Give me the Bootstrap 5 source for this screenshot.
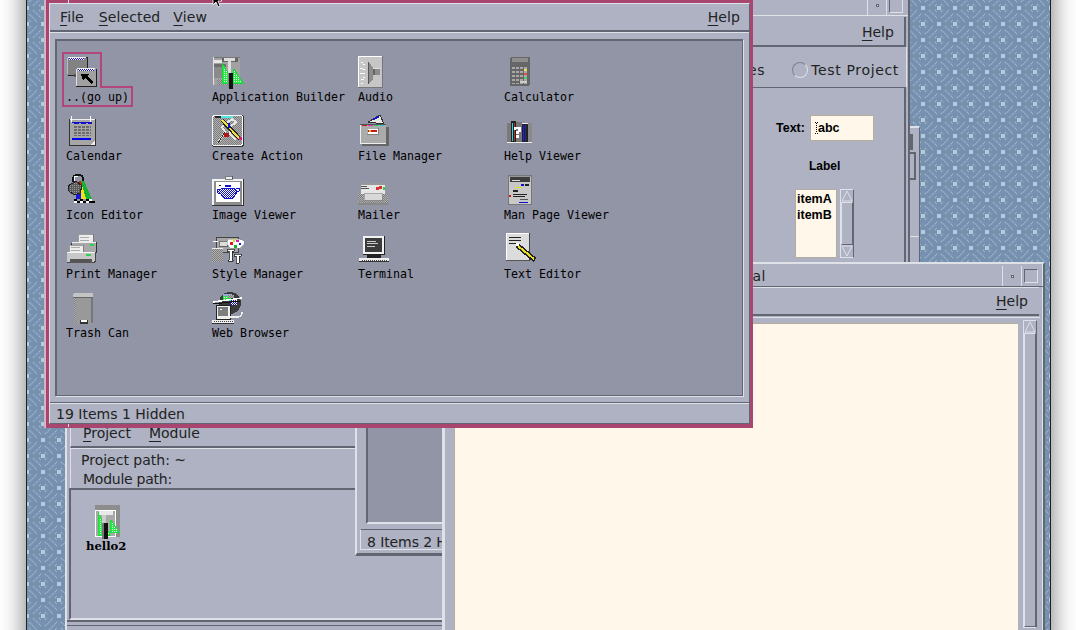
<!DOCTYPE html>
<html lang="en">
<head>
<meta charset="utf-8">
<title>CDE Desktop</title>
<link rel="stylesheet" href="https://cdn.jsdelivr.net/npm/bootstrap@5.3.0/dist/css/bootstrap.min.css">
<style>
html,body{margin:0;height:630px;overflow:hidden;background:#fff;}
:root{--g:#aeb2c3;--p:#9295a6;--lt:#dfe1e8;--dk:#626572;--pk:#a94670;--cr:#fff7e9;}
.dt-root{position:relative;width:1076px;height:630px;overflow:hidden;background:#fff;font-family:"DejaVu Sans",sans-serif;font-size:14px;color:#222;line-height:1;}
.dt-screen{position:absolute;left:26px;top:-40px;width:1025px;height:720px;background:#7f9ab6;border:solid #222;border-width:0 1px;box-shadow:0 0 24px rgba(0,0,0,.55);}
.dt-wall{display:block;width:100%;height:100%;}
.cde-win{position:absolute;background:var(--g);overflow:hidden;}
.mnemo u{text-decoration-thickness:1px;text-underline-offset:3px;}
.sliver{left:908px;top:126px;width:12px;height:140px;border-top:2px solid var(--lt);border-left:2px solid var(--dk);border-right:1px solid var(--dk);}
.sliver-a{height:16px;width:3px;background:var(--dk);margin-top:6px;}
.sliver-b{height:28px;width:6px;border:solid var(--dk);border-width:2px 2px 2px 0;margin-top:2px;}
.sliver-c{height:1px;background:var(--lt);margin-top:56px;}
.winab{left:738px;top:-4px;width:172px;height:270px;border-right:2px solid var(--dk);}
.ab-title{height:20px;border-bottom:1px solid var(--lt);padding-right:3px;}
.tb-btn{width:19px;border-left:1px solid var(--lt);}
.tb-min{width:3px;height:3px;border:1px solid var(--dk);background:var(--lt);}
.tb-max{width:14px;height:14px;border:1px solid var(--dk);border-right-color:var(--lt);border-bottom-color:var(--lt);}
.ab-menu{height:30px;border-bottom:2px solid var(--dk);border-right:2px solid var(--dk);margin:1px 2px 0 0;padding:2px 10px 0 0;letter-spacing:.05px;}
.ab-tabs{height:40px;border-right:1px solid var(--lt);margin-right:1px;padding:6px 0 0 10px;letter-spacing:.65px;}
.ab-radio{width:16px;height:16px;border-radius:50%;border:1.5px solid;border-color:#7f8291 var(--lt) var(--lt) #7f8291;margin-left:27px;margin-right:3px;}
.ab-body{border-top:1px solid var(--dk);border-right:2px solid var(--dk);margin-right:2px;height:180px;padding:27px 0 0 38px;font-family:"Liberation Sans",sans-serif;font-weight:700;font-size:12.5px;color:#000;}
.ab-input{width:64px;height:26px;background:var(--cr);border:1px solid #b3aca0;margin-left:5px;padding-left:4px;}
.ab-caret{display:block;width:4px;height:15px;margin-right:-1px;flex-shrink:0;}
.ab-label{font-size:12px;margin:19px 0 0 33px;}
.ab-list{width:42px;height:69px;background:var(--cr);border:1px solid #b3aca0;padding:1px 0 0 1px;line-height:16px;}
.ab-listrow{margin:17px 0 0 19px;}
.sb-bar{width:14px;margin-left:3px;border:1px solid var(--lt);border-right-color:var(--dk);border-bottom-color:var(--lt);}
.sb-arrow{display:block;width:12px;height:12px;}
.sb-thumb{border:1px solid var(--lt);border-right-color:var(--dk);border-bottom-color:var(--dk);}
.term{left:442px;top:262px;width:603px;height:380px;border:solid var(--lt);border-width:2px 2px 0 3px;border-right-color:var(--dk);box-shadow:inset -1px 0 0 var(--lt);}
.term-title{height:21px;border-bottom:1px solid var(--dk);margin-top:2px;padding-right:3px;}
.term-name{margin-left:259px;letter-spacing:.3px;}
.term-menu{height:29px;border-top:1px solid var(--lt);border-bottom:2px solid var(--dk);margin-right:4px;padding:0 11px 0 0;}
.term-view{padding:5px 4px 0 9px;border-top:1px solid var(--lt);margin-top:1px;margin-right:3px;}
.term-cream{width:564px;height:320px;background:var(--cr);border:solid #b3aca0;border-width:1px 0 0 1px;}
.term-sb{width:14px;margin:-3px 0 0 5px;height:308px;}
.org{left:65px;top:400px;width:384px;height:240px;border-left:2px solid var(--lt);}
.org-menu{height:48px;padding:0 0 6px 12px;margin-left:3px;border-bottom:2px solid var(--dk);border-left:1px solid var(--lt);}
.org-menu .om2{margin-left:18px;}
.org-info{height:40px;padding:4px 0 0 10px;margin-left:3px;border-left:1px solid var(--lt);border-top:1px solid var(--lt);}
.org-info .op2{margin:5px 0 0 2px;letter-spacing:-.25px;}
.org-view{height:132px;margin-left:2px;border:solid var(--dk);border-width:2px 0 0 2px;border-bottom:2px solid var(--lt);padding:15px 0 0 15px;}
.org-foot{border-top:2px solid var(--dk);height:6px;border-bottom:1px solid var(--dk);margin-left:-2px;}
.hello-lbl{font-family:"DejaVu Serif",serif;font-weight:700;font-size:11.6px;color:#000;margin:2px 0 0 0;}
.mid{left:355px;top:400px;width:92px;height:156px;border-left:2px solid var(--lt);border-bottom:3px solid var(--dk);border-right:0;}
.mid-panel{height:124px;margin-left:9px;background:var(--p);border-left:2px solid var(--dk);border-bottom:2px solid var(--lt);}
.mid-status{margin:5px 0 0 3px;height:21px;border:1px solid var(--lt);border-top-color:var(--dk);padding:5px 0 0 6px;white-space:nowrap;letter-spacing:-.1px;}
.fm{left:44px;top:0;width:709px;height:428px;background:var(--pk);padding:3px 3px 4px 3px;border-left:2px solid #d6b2c4;}
.fm-in{height:100%;border-top:1px solid var(--lt);border-left:1px solid var(--lt);border-bottom:1px solid var(--dk);border-right:1px solid var(--dk);display:flex;flex-direction:column;background:var(--g);}
.fm-menu{height:28px;border-bottom:2px solid var(--dk);padding:0 9px 0 10px;letter-spacing:.1px;}
.fm-menu .mi1{margin-right:15px;}
.fm-menu .mi2{margin-right:13px;}
.fm-work{flex:1;border-top:1px solid var(--lt);padding:6px 6px 6px 5px;min-height:0;}
.fm-panel{height:100%;background:var(--p);border:solid var(--dk);border-width:2px 1px 1px 2px;box-shadow:1px 1px 0 var(--lt);padding:14px 0 0 9px;display:grid;grid-template-columns:repeat(4,146px);grid-auto-rows:59px;}
.fm-status{height:21px;border-top:1px solid var(--dk);padding:4px 0 0 6px;box-shadow:inset 0 1px 0 var(--lt);}
.ic-cell{position:relative;}
.ic{display:block;width:40px;height:34px;}
.ic-lbl{font-family:"DejaVu Sans Mono",monospace;font-size:11.63px;line-height:14px;color:#000;white-space:nowrap;margin-top:1px;}
.sel-mark{position:absolute;left:-5px;top:-4px;width:74px;height:58px;}
.cursor{position:absolute;left:208px;top:-8px;width:16px;height:16px;}
.tick{position:absolute;background:var(--lt);}
.tick-a{left:22px;top:0;width:1px;height:3px;}
.tick-b{left:22px;top:424px;width:1px;height:3px;}
</style>
</head>
<body>
<svg width="0" height="0" class="position-absolute" aria-hidden="true">
<defs>
<pattern id="wall" width="32" height="32" patternUnits="userSpaceOnUse">
<rect width="32" height="32" fill="#7591af"/>
<g stroke="#a5bace" stroke-width="1.1" fill="none" stroke-dasharray="1.4 .7">
<path d="M2 4 4 2M2 10 10 2M6 14 14 6M12 14 14 12"/>
<path d="M28 2 30 4M22 2 30 10M18 6 26 14M18 12 20 14"/>
<path d="M2 28 4 30M2 22 10 30M6 18 14 26M12 18 14 20"/>
<path d="M18 20 20 18M18 26 26 18M22 30 30 22M28 30 30 28"/>
</g>
<g fill="#b9c9d8"><rect x="-2" y="-2" width="4" height="4"/><rect x="30" y="-2" width="4" height="4"/><rect x="-2" y="30" width="4" height="4"/><rect x="30" y="30" width="4" height="4"/><rect x="14" y="14" width="4" height="4"/><rect x="14" y="-2" width="4" height="4"/><rect x="14" y="30" width="4" height="4"/><rect x="-2" y="14" width="4" height="4"/><rect x="30" y="14" width="4" height="4"/></g>
</pattern>
<pattern id="dBlue" width="2" height="2" patternUnits="userSpaceOnUse"><rect width="2" height="2" fill="#fff"/><rect width="1" height="1" fill="#11c"/><rect x="1" y="1" width="1" height="1" fill="#11c"/></pattern>
<pattern id="dGreen" width="2" height="2" patternUnits="userSpaceOnUse"><rect width="2" height="2" fill="#2ee64a"/><rect width="1" height="1" fill="#e4ffe8"/></pattern>
<pattern id="dGray" width="2" height="2" patternUnits="userSpaceOnUse"><rect width="2" height="2" fill="#b0b0b0"/><rect width="1" height="1" fill="#7c7c7c"/><rect x="1" y="1" width="1" height="1" fill="#7c7c7c"/></pattern>
<pattern id="dDark" width="2" height="2" patternUnits="userSpaceOnUse"><rect width="2" height="2" fill="#5a5a5a"/><rect width="1" height="1" fill="#999"/></pattern>
<pattern id="btnP" width="4" height="4" patternUnits="userSpaceOnUse"><rect width="3" height="2" fill="#a8a8a8"/></pattern>
<pattern id="calP" width="4" height="3" patternUnits="userSpaceOnUse"><rect width="3" height="2" fill="#6c6c6c"/></pattern>
<pattern id="keyP" width="2" height="2" patternUnits="userSpaceOnUse"><rect width="1" height="1" fill="#444"/></pattern>
</defs>
</svg>
<div class="dt-root">
<div class="dt-screen"><svg class="dt-wall" aria-hidden="true"><rect width="100%" height="100%" fill="url(#wall)"/></svg></div>

<div class="cde-win sliver"><div class="sliver-a"></div><div class="sliver-b"></div><div class="sliver-c"></div></div>

<div class="cde-win winab d-flex flex-column">
 <div class="ab-title d-flex justify-content-end align-items-stretch flex-shrink-0">
  <div class="tb-btn d-flex align-items-center justify-content-center"><div class="tb-min"></div></div>
  <div class="tb-btn d-flex align-items-center justify-content-center"><div class="tb-max"></div></div>
 </div>
 <div class="ab-menu d-flex justify-content-end align-items-center mnemo flex-shrink-0"><span><u>H</u>elp</span></div>
 <div class="ab-tabs d-flex align-items-center flex-shrink-0"><span>es</span><span class="ab-radio d-inline-block"></span><span>Test Project</span></div>
 <div class="ab-body">
  <div class="d-flex align-items-center"><span>Text:</span><div class="ab-input d-flex align-items-center"><svg class="ab-caret" viewBox="0 0 4 15" shape-rendering="crispEdges" aria-hidden="true"><path d="M0 1h1v1H0zM2 1h1v1H2zM1 2h1v1H1zM1 4h1v1H1zM1 6h1v1H1zM1 8h1v1H1zM1 10h1v1H1zM0 12h1v1H0zM2 12h1v1H2z" fill="#000"/></svg>abc</div></div>
  <div class="ab-label">Label</div>
  <div class="ab-listrow d-flex align-items-stretch">
   <div class="ab-list">itemA<br>itemB</div>
   <div class="sb-bar d-flex flex-column">
    <svg class="sb-arrow" viewBox="0 0 12 12" aria-hidden="true"><path d="M6 1 11 11H1Z" fill="#aeb2c3" stroke="#dfe1e8"/></svg>
    <div class="sb-thumb flex-grow-1"></div>
    <svg class="sb-arrow" viewBox="0 0 12 12" aria-hidden="true"><path d="M6 11 11 1H1Z" fill="#aeb2c3" stroke="#dfe1e8"/></svg>
   </div>
  </div>
 </div>
</div>

<div class="cde-win org d-flex flex-column">
 <div class="org-menu d-flex align-items-end mnemo flex-shrink-0"><span><u>P</u>roject</span><span class="om2"><u>M</u>odule</span></div>
 <div class="org-info flex-shrink-0"><div>Project path: ~</div><div class="op2">Module path:</div></div>
 <div class="org-view flex-shrink-0">
  <svg width="42" height="34" viewBox="0 0 42 34" class="d-block" shape-rendering="crispEdges" aria-hidden="true">
   <rect x="9" y="0" width="25" height="32" fill="#8d8d8d"/><rect x="9" y="5" width="21" height="27" fill="#fff"/><rect x="10" y="6" width="19" height="25" fill="#a8a8a8"/>
   <path d="M12 7 24 30H12Z" fill="url(#dGreen)" stroke="#19e23a"/><path d="M25 15 33 27H24Z" fill="url(#dGreen)" stroke="#19e23a"/>
   <rect x="13" y="6" width="14" height="4" fill="#e8e8e8"/><rect x="16" y="10" width="4" height="8" fill="#ccc"/><rect x="17" y="18" width="5" height="16" fill="#111"/><rect x="16" y="18" width="2" height="16" fill="#777"/>
  </svg>
  <div class="hello-lbl">hello2</div>
 </div>
 <div class="org-foot"></div>
</div>

<div class="cde-win mid">
 <div class="mid-panel"></div>
 <div class="mid-status">8 Items 2 H</div>
</div>

<div class="cde-win term">
 <div class="term-title d-flex align-items-stretch justify-content-between flex-shrink-0">
  <div class="align-self-center term-name">Terminal</div>
  <div class="d-flex"><div class="tb-btn d-flex align-items-center justify-content-center"><div class="tb-min"></div></div><div class="tb-btn d-flex align-items-center justify-content-center"><div class="tb-max"></div></div></div>
 </div>
 <div class="term-menu d-flex justify-content-end align-items-center mnemo"><span><u>H</u>elp</span></div>
 <div class="term-view d-flex">
  <div class="term-cream flex-shrink-0"></div>
  <div class="sb-bar term-sb d-flex flex-column flex-shrink-0">
   <svg class="sb-arrow" viewBox="0 0 12 12" aria-hidden="true"><path d="M6 1 11 11H1Z" fill="#aeb2c3" stroke="#dfe1e8"/></svg>
   <div class="sb-thumb flex-grow-1"></div>
  </div>
 </div>
</div>

<div class="cde-win fm">
 <div class="tick tick-a"></div><div class="tick tick-b"></div>
 <div class="fm-in">
  <div class="fm-menu d-flex align-items-center mnemo flex-shrink-0">
   <span class="mi1"><u>F</u>ile</span><span class="mi2"><u>S</u>elected</span><span><u>V</u>iew</span>
   <span class="ms-auto"><u>H</u>elp</span>
  </div>
  <div class="fm-work">
   <div class="fm-panel">

    <div class="ic-cell">
     <svg class="sel-mark" viewBox="0 0 74 58" aria-hidden="true"><path d="M2 2H40V36H71V55H2Z" fill="none" stroke="#b2467a" stroke-width="2"/></svg>
     <svg class="ic" viewBox="0 0 40 34" shape-rendering="crispEdges" aria-hidden="true">
      <rect x="2" y="2" width="20" height="19" fill="#222"/><rect x="1" y="3" width="20" height="17" fill="#828282"/><rect x="2" y="2" width="18" height="1" fill="#eee"/><rect x="3" y="3" width="15" height="2" fill="url(#dBlue)"/><rect x="1" y="3" width="1" height="16" fill="#bbb"/>
      <rect x="8" y="19" width="22" height="3" fill="#555"/>
      <rect x="10" y="14" width="21" height="18" fill="#222"/><rect x="10" y="14" width="20" height="17" fill="#a0a0a0"/><rect x="11" y="13" width="18" height="1" fill="#eee"/><rect x="12" y="14" width="16" height="2" fill="url(#dBlue)"/><rect x="10" y="14" width="1" height="17" fill="#ddd"/>
      <path d="M15 19H23L21 21 27 27 25 29 19 23 17 25Z" fill="#000"/>
     </svg>
     <div class="ic-lbl">..(go up)</div>
    </div>

    <div class="ic-cell">
     <svg class="ic" viewBox="0 0 40 34" shape-rendering="crispEdges" aria-hidden="true">
      <rect x="1" y="2" width="27" height="28" fill="#a2a2a2"/><rect x="1" y="2" width="27" height="1" fill="#777"/><rect x="1" y="2" width="1" height="28" fill="#e0e0e0"/>
      <rect x="2" y="5" width="8" height="3" fill="#e6e6e6"/><rect x="2" y="9" width="12" height="3" fill="#6e6e6e"/><rect x="2" y="12" width="10" height="11" fill="#8a8a8a"/><rect x="5" y="24" width="22" height="6" fill="url(#dGray)"/>
      <rect x="10" y="3" width="16" height="4" fill="#666"/><rect x="12" y="3" width="11" height="3" fill="#ddd"/>
      <path d="M10 8 22 28H10Z" fill="url(#dGreen)" stroke="#17d838"/><path d="M22 14 31 28H20Z" fill="url(#dGreen)" stroke="#17d838"/>
      <rect x="16" y="6" width="3" height="12" fill="#ddd"/><rect x="17" y="18" width="4" height="16" fill="#111"/><rect x="16" y="18" width="1" height="15" fill="#888"/>
     </svg>
     <div class="ic-lbl">Application Builder</div>
    </div>

    <div class="ic-cell">
     <svg class="ic" viewBox="0 0 40 34" shape-rendering="crispEdges" aria-hidden="true">
      <rect x="0" y="1" width="25" height="32" fill="#c6c6c6"/><rect x="0" y="1" width="25" height="1" fill="#fff"/><rect x="0" y="1" width="1" height="32" fill="#fff"/><rect x="24" y="1" width="1" height="32" fill="#777"/><rect x="0" y="32" width="25" height="1" fill="#777"/>
      <path d="M11 7 15 13H22V20H15V24L11 29Z" fill="#8c8c8c"/><path d="M15 13H22V14H15Z" fill="#ddd"/><path d="M11 7V29H10V7Z" fill="#555"/><rect x="15" y="14" width="2" height="6" fill="#666"/>
      <g fill="#fff"><rect x="3" y="7" width="2" height="1"/><rect x="5" y="9" width="2" height="1"/><rect x="2" y="13" width="3" height="1"/><rect x="5" y="14" width="2" height="1"/><rect x="2" y="18" width="5" height="1"/><rect x="5" y="22" width="2" height="1"/><rect x="3" y="24" width="3" height="1"/><rect x="3" y="28" width="2" height="1"/></g>
     </svg>
     <div class="ic-lbl">Audio</div>
    </div>

    <div class="ic-cell">
     <svg class="ic" viewBox="0 0 40 34" shape-rendering="crispEdges" aria-hidden="true">
      <rect x="6" y="2" width="20" height="29" rx="2" fill="#666"/><rect x="8" y="3" width="16" height="4" fill="#8e8e8e"/><rect x="8" y="10" width="16" height="19" fill="url(#btnP)"/>
      <rect x="20" y="14" width="3" height="2" fill="#e8e050"/><rect x="20" y="18" width="3" height="2" fill="#e05050"/><rect x="20" y="22" width="3" height="2" fill="#50d060"/><rect x="16" y="26" width="7" height="2" fill="#ccc"/>
     </svg>
     <div class="ic-lbl">Calculator</div>
    </div>

    <div class="ic-cell">
     <svg class="ic" viewBox="0 0 40 34" shape-rendering="crispEdges" aria-hidden="true">
      <rect x="3" y="5" width="27" height="27" fill="#333"/><rect x="4" y="5" width="25" height="26" fill="#a6a6a6"/><rect x="4" y="5" width="25" height="1" fill="#eee"/>
      <rect x="5" y="2" width="1" height="6" fill="#fff"/><rect x="24" y="2" width="1" height="6" fill="#fff"/>
      <rect x="6" y="8" width="20" height="1" fill="#11c"/><rect x="8" y="9" width="5" height="1" fill="#11c"/><rect x="15" y="9" width="5" height="1" fill="#11c"/><rect x="22" y="9" width="4" height="1" fill="#11c"/>
      <rect x="7" y="11" width="18" height="11" fill="url(#calP)"/><rect x="6" y="24" width="19" height="2" fill="#00e"/><path d="M24 31 29 31 29 26Z" fill="#eee"/>
     </svg>
     <div class="ic-lbl">Calendar</div>
    </div>

    <div class="ic-cell">
     <svg class="ic" viewBox="0 0 40 34" shape-rendering="crispEdges" aria-hidden="true">
      <rect x="0" y="1" width="32" height="32" rx="3" fill="#333"/><rect x="0" y="1" width="31" height="31" rx="3" fill="#f4f4f4"/><rect x="1" y="2" width="29" height="29" rx="2" fill="url(#dGray)"/>
      <rect x="8" y="2" width="13" height="2" fill="#4fe6e6"/><rect x="3" y="2" width="6" height="2" fill="#222"/>
      <path d="M6 29 13 18 10 13 20 5 24 8 18 13 18 20 24 26" fill="none" stroke="#e6e6e6" stroke-width="2"/><path d="M6 29 13 18" fill="none" stroke="#333"/>
      <path d="M10 6 28 25" fill="none" stroke="#222" stroke-width="4"/><path d="M10 6 28 25" fill="none" stroke="#f0e040" stroke-width="2"/>
      <rect x="27" y="23" width="3" height="3" fill="#d21d8a"/><rect x="12" y="19" width="5" height="4" fill="#b01818"/><rect x="16" y="9" width="2" height="5" fill="#11c"/>
     </svg>
     <div class="ic-lbl">Create Action</div>
    </div>

    <div class="ic-cell">
     <svg class="ic" viewBox="0 0 40 34" shape-rendering="crispEdges" aria-hidden="true">
      <path d="M10 8 22 1 26 10Z" fill="#e8e8e8" stroke="#333"/><rect x="15" y="3" width="6" height="2" fill="#11c" transform="rotate(-25 18 4)"/>
      <rect x="4" y="13" width="27" height="19" fill="#666"/><rect x="2" y="11" width="26" height="19" fill="#ababab"/><rect x="2" y="10" width="26" height="1" fill="#555"/><rect x="2" y="11" width="1" height="19" fill="#eee"/><rect x="2" y="29" width="26" height="1" fill="#eee"/>
      <rect x="4" y="11" width="5" height="1" fill="#d01818"/><rect x="10" y="11" width="5" height="1" fill="#e030c0"/><rect x="16" y="11" width="4" height="1" fill="#30d050"/><rect x="21" y="11" width="5" height="1" fill="#30d0d0"/>
      <rect x="9" y="14" width="11" height="6" fill="#fff" stroke="#555" stroke-width=".5"/><rect x="10" y="16" width="9" height="2" fill="#c81818"/><rect x="11" y="16" width="2" height="2" fill="#e6c030"/>
     </svg>
     <div class="ic-lbl">File Manager</div>
    </div>

    <div class="ic-cell">
     <svg class="ic" viewBox="0 0 40 34" shape-rendering="crispEdges" aria-hidden="true">
      <rect x="3" y="9" width="25" height="20" fill="#ededed"/><rect x="3" y="9" width="4" height="19" fill="#7a7a7a"/>
      <rect x="7" y="7" width="5" height="21" fill="#222"/><rect x="8" y="9" width="1" height="18" fill="#22d8d8"/><rect x="10" y="9" width="1" height="18" fill="#d02020"/>
      <rect x="12" y="8" width="6" height="20" fill="#777"/><rect x="18" y="10" width="6" height="18" fill="#222"/><rect x="19" y="11" width="1" height="16" fill="#22c"/><rect x="21" y="11" width="1" height="16" fill="#22c"/>
      <rect x="24" y="9" width="4" height="19" fill="#8a8a8a"/>
      <path d="M10 13H17V18H15V20H12V17H14V15H12V16H10ZM12 21H15V24H12Z" fill="#fff"/>
     </svg>
     <div class="ic-lbl">Help Viewer</div>
    </div>

    <div class="ic-cell">
     <svg class="ic" viewBox="0 0 40 34" shape-rendering="crispEdges" aria-hidden="true">
      <path d="M7 9V5Q7 2 12 2T17 5V10" fill="none" stroke="#111" stroke-width="1.5"/><path d="M8 9V5Q8 3 12 3" fill="none" stroke="#fff"/>
      <path d="M13 8 H18 L24 25 H10 Z" fill="#d81818"/><path d="M15 8H18L26 26H19Z" fill="#18b030"/><path d="M14 12H16L20 26H15Z" fill="#f0e020"/><path d="M12 10 14 10 15 26H10Z" fill="#1818d8"/>
      <path d="M2 13 10 8 16 13 14 20 8 22 3 18Z" fill="url(#dDark)" stroke="#222"/>
      <g fill="#000"><rect x="8" y="26" width="3" height="2"/><rect x="14" y="26" width="3" height="2"/><rect x="20" y="26" width="3" height="2"/><rect x="26" y="28" width="3" height="2"/><rect x="11" y="28" width="3" height="2"/><rect x="17" y="28" width="3" height="2"/><rect x="23" y="28" width="3" height="2"/></g><g fill="#fff"><rect x="8" y="28" width="3" height="2"/><rect x="14" y="28" width="3" height="2"/><rect x="20" y="28" width="3" height="2"/><rect x="23" y="26" width="3" height="2"/></g>
     </svg>
     <div class="ic-lbl">Icon Editor</div>
    </div>

    <div class="ic-cell">
     <svg class="ic" viewBox="0 0 40 34" shape-rendering="crispEdges" aria-hidden="true">
      <rect x="0" y="6" width="32" height="27" fill="#333"/><rect x="0" y="6" width="31" height="26" fill="#f4f4f4"/><rect x="2" y="8" width="28" height="24" fill="#8c8c8c"/><rect x="4" y="9" width="24" height="20" fill="#fff"/>
      <rect x="13" y="3" width="7" height="3" fill="#eee" stroke="#333" stroke-width=".6"/>
      <path d="M10 15H22L25 19 21 25H12L8 20H6L5 16H9Z" fill="url(#dBlue)" stroke="#11c"/><path d="M24 15H27V18L25 19" fill="none" stroke="#11c"/><rect x="13" y="12" width="6" height="2" fill="#11c"/><rect x="7" y="12" width="2" height="1" fill="#222"/>
     </svg>
     <div class="ic-lbl">Image Viewer</div>
    </div>

    <div class="ic-cell">
     <svg class="ic" viewBox="0 0 40 34" shape-rendering="crispEdges" aria-hidden="true">
      <rect x="3" y="10" width="24" height="14" fill="#e6e6e6"/><rect x="3" y="10" width="24" height="2" fill="#999"/><rect x="3" y="15" width="8" height="1" fill="#555"/><rect x="3" y="13" width="6" height="1" fill="#555"/>
      <rect x="18" y="14" width="3" height="3" fill="#d83030"/><rect x="21" y="13" width="3" height="3" fill="#d83030"/><rect x="25" y="14" width="2" height="3" fill="#30d040"/>
      <rect x="0" y="21" width="30" height="11" fill="url(#dGray)"/><rect x="6" y="20" width="18" height="7" fill="#d8d8d8" stroke="#888" stroke-width=".6"/><rect x="0" y="30" width="30" height="2" fill="#888"/>
     </svg>
     <div class="ic-lbl">Mailer</div>
    </div>

    <div class="ic-cell">
     <svg class="ic" viewBox="0 0 40 34" shape-rendering="crispEdges" aria-hidden="true">
      <rect x="4" y="2" width="24" height="30" fill="#777"/><rect x="5" y="3" width="22" height="28" fill="#c8c8c8"/><rect x="6" y="3" width="20" height="6" fill="#3c3c3c"/><rect x="6" y="3" width="20" height="1" fill="#888"/><rect x="8" y="7" width="8" height="1" fill="#ddd"/>
      <rect x="5" y="3" width="22" height="1" fill="#999"/><rect x="17" y="11" width="3" height="2" fill="#11c"/><rect x="21" y="11" width="4" height="2" fill="#222"/><rect x="11" y="14" width="7" height="1" fill="#e6e020"/><rect x="9" y="17" width="5" height="2" fill="#222"/><rect x="5" y="22" width="2" height="2" fill="#d81818"/>
      <rect x="9" y="21" width="14" height="1" fill="#222"/><rect x="9" y="23" width="12" height="1" fill="#222"/><rect x="16" y="26" width="8" height="1" fill="#555"/><rect x="15" y="29" width="9" height="1" fill="#11c"/>
     </svg>
     <div class="ic-lbl">Man Page Viewer</div>
    </div>

    <div class="ic-cell">
     <svg class="ic" viewBox="0 0 40 34" shape-rendering="crispEdges" aria-hidden="true">
      <rect x="12" y="2" width="15" height="11" fill="#ededed" stroke="#666" stroke-width=".6"/><rect x="14" y="5" width="9" height="1" fill="#aaa"/><rect x="14" y="8" width="9" height="1" fill="#aaa"/>
      <rect x="5" y="10" width="26" height="12" rx="2" fill="#333"/><rect x="6" y="10" width="24" height="11" rx="2" fill="#a8a8a8"/><rect x="6" y="10" width="24" height="1" fill="#eee"/><rect x="24" y="12" width="4" height="2" fill="#30d050"/>
      <rect x="3" y="13" width="14" height="9" fill="#ededed" stroke="#666" stroke-width=".6"/><rect x="5" y="15" width="9" height="1" fill="#aaa"/><rect x="5" y="18" width="9" height="1" fill="#aaa"/>
      <rect x="1" y="20" width="29" height="11" rx="2" fill="#444"/><rect x="1" y="20" width="28" height="10" rx="2" fill="#c8c8c8"/><rect x="4" y="27" width="22" height="4" fill="#555"/><rect x="20" y="22" width="5" height="2" fill="#30d050"/><rect x="1" y="20" width="28" height="1" fill="#f4f4f4"/>
     </svg>
     <div class="ic-lbl">Print Manager</div>
    </div>

    <div class="ic-cell">
     <svg class="ic" viewBox="0 0 40 34" shape-rendering="crispEdges" aria-hidden="true">
      <rect x="4" y="5" width="22" height="15" fill="#a6a6a6" stroke="#444"/><rect x="7" y="9" width="8" height="5" fill="#ddd" stroke="#333" stroke-width=".6"/><rect x="1" y="9" width="5" height="1" fill="#fff"/>
      <rect x="0" y="16" width="11" height="14" fill="url(#dGray)"/><rect x="0" y="16" width="11" height="1" fill="#eee"/>
      <path d="M16 7H27L32 9V12L28 16H18L15 12Z" fill="#fff" stroke="#888" stroke-width=".5"/><rect x="18" y="10" width="3" height="3" fill="#e01818"/><rect x="21" y="7" width="2" height="3" fill="#e8d020"/><rect x="24" y="8" width="3" height="2" fill="#d020c0"/><rect x="22" y="13" width="3" height="3" fill="#18b030"/><rect x="27" y="11" width="2" height="2" fill="#1818d8"/>
      <path d="M15 17H22V19H20V28H21V29H16V28H17V19H15Z" fill="#fff" stroke="#111" stroke-width=".7"/><path d="M22 22H29V24H27V31H24V24H22Z" fill="#fff" stroke="#111" stroke-width=".7"/>
     </svg>
     <div class="ic-lbl">Style Manager</div>
    </div>

    <div class="ic-cell">
     <svg class="ic" viewBox="0 0 40 34" shape-rendering="crispEdges" aria-hidden="true">
      <rect x="5" y="4" width="22" height="19" rx="1" fill="#222"/><rect x="5" y="4" width="21" height="18" rx="1" fill="#f2f2f2"/><rect x="7" y="6" width="17" height="14" fill="#3b3b3b"/>
      <rect x="9" y="9" width="9" height="1" fill="#ccc"/><rect x="9" y="11" width="11" height="1" fill="#ccc"/><rect x="9" y="14" width="8" height="1" fill="#ccc"/>
      <rect x="9" y="23" width="14" height="3" fill="#222"/><rect x="1" y="26" width="30" height="4" fill="#eee"/><rect x="3" y="27" width="26" height="2" fill="url(#keyP)"/><rect x="1" y="29" width="30" height="1" fill="#333"/>
     </svg>
     <div class="ic-lbl">Terminal</div>
    </div>

    <div class="ic-cell">
     <svg class="ic" viewBox="0 0 40 34" shape-rendering="crispEdges" aria-hidden="true">
      <rect x="2" y="1" width="23" height="28" fill="#dcdcdc"/><rect x="2" y="1" width="23" height="1" fill="#fff"/><rect x="2" y="1" width="1" height="28" fill="#fff"/><rect x="25" y="1" width="1" height="28" fill="#444"/><rect x="2" y="28" width="23" height="1" fill="#555"/>
      <rect x="5" y="5" width="12" height="1" fill="#222"/><rect x="5" y="8" width="12" height="1" fill="#222"/><rect x="5" y="11" width="9" height="1" fill="#222"/>
      <path d="M13 13 31 28" fill="none" stroke="#222" stroke-width="5"/><path d="M14 14 30 27" fill="none" stroke="#e8e020" stroke-width="2"/><rect x="12" y="11" width="3" height="3" fill="#fff"/>
     </svg>
     <div class="ic-lbl">Text Editor</div>
    </div>

    <div class="ic-cell">
     <svg class="ic" viewBox="0 0 40 34" shape-rendering="crispEdges" aria-hidden="true">
      <rect x="8" y="4" width="19" height="29" fill="#999"/><rect x="7" y="2" width="20" height="5" rx="2" fill="#c4c4c4"/><rect x="7" y="6" width="20" height="1" fill="#666"/><rect x="8" y="7" width="2" height="25" fill="url(#dGray)"/><rect x="25" y="7" width="2" height="25" fill="#777"/><rect x="14" y="29" width="8" height="4" fill="#333"/><rect x="15" y="29" width="6" height="2" fill="#fff"/>
     </svg>
     <div class="ic-lbl">Trash Can</div>
    </div>

    <div class="ic-cell">
     <svg class="ic" viewBox="0 0 40 34" shape-rendering="crispEdges" aria-hidden="true">
      <circle cx="18" cy="12" r="11" fill="#3a3a3a"/><rect x="11" y="5" width="8" height="5" fill="url(#dGreen)"/><rect x="19" y="9" width="6" height="5" fill="url(#dBlue)"/><rect x="11" y="3" width="9" height="2" fill="#9ad"/><rect x="16" y="4" width="6" height="3" fill="url(#dGray)"/>
      <path d="M1 11 30 7" fill="none" stroke="#fff" stroke-width="1.5"/><path d="M1 13 28 10" fill="none" stroke="#111"/>
      <rect x="4" y="14" width="14" height="14" fill="#eee" stroke="#222"/><rect x="6" y="16" width="10" height="9" fill="#7d7d7d"/><rect x="8" y="18" width="2" height="1" fill="#fff"/>
      <path d="M18 26H25Q30 26 30 21" fill="none" stroke="#eee" stroke-width="1.5"/><rect x="0" y="29" width="22" height="3" fill="#eee"/><rect x="1" y="30" width="20" height="1" fill="url(#keyP)"/><rect x="0" y="32" width="22" height="1" fill="#333"/>
     </svg>
     <div class="ic-lbl">Web Browser</div>
    </div>
   </div>
  </div>
  <div class="fm-status flex-shrink-0">19 Items 1 Hidden</div>
 </div>
</div>

<svg class="cursor" viewBox="0 0 16 16" aria-hidden="true"><path d="M5 0V13L8 10 10 15 12 14 10 9H14Z" fill="#000" stroke="#fff" stroke-width=".8"/></svg>
</div>
</body>
</html>
